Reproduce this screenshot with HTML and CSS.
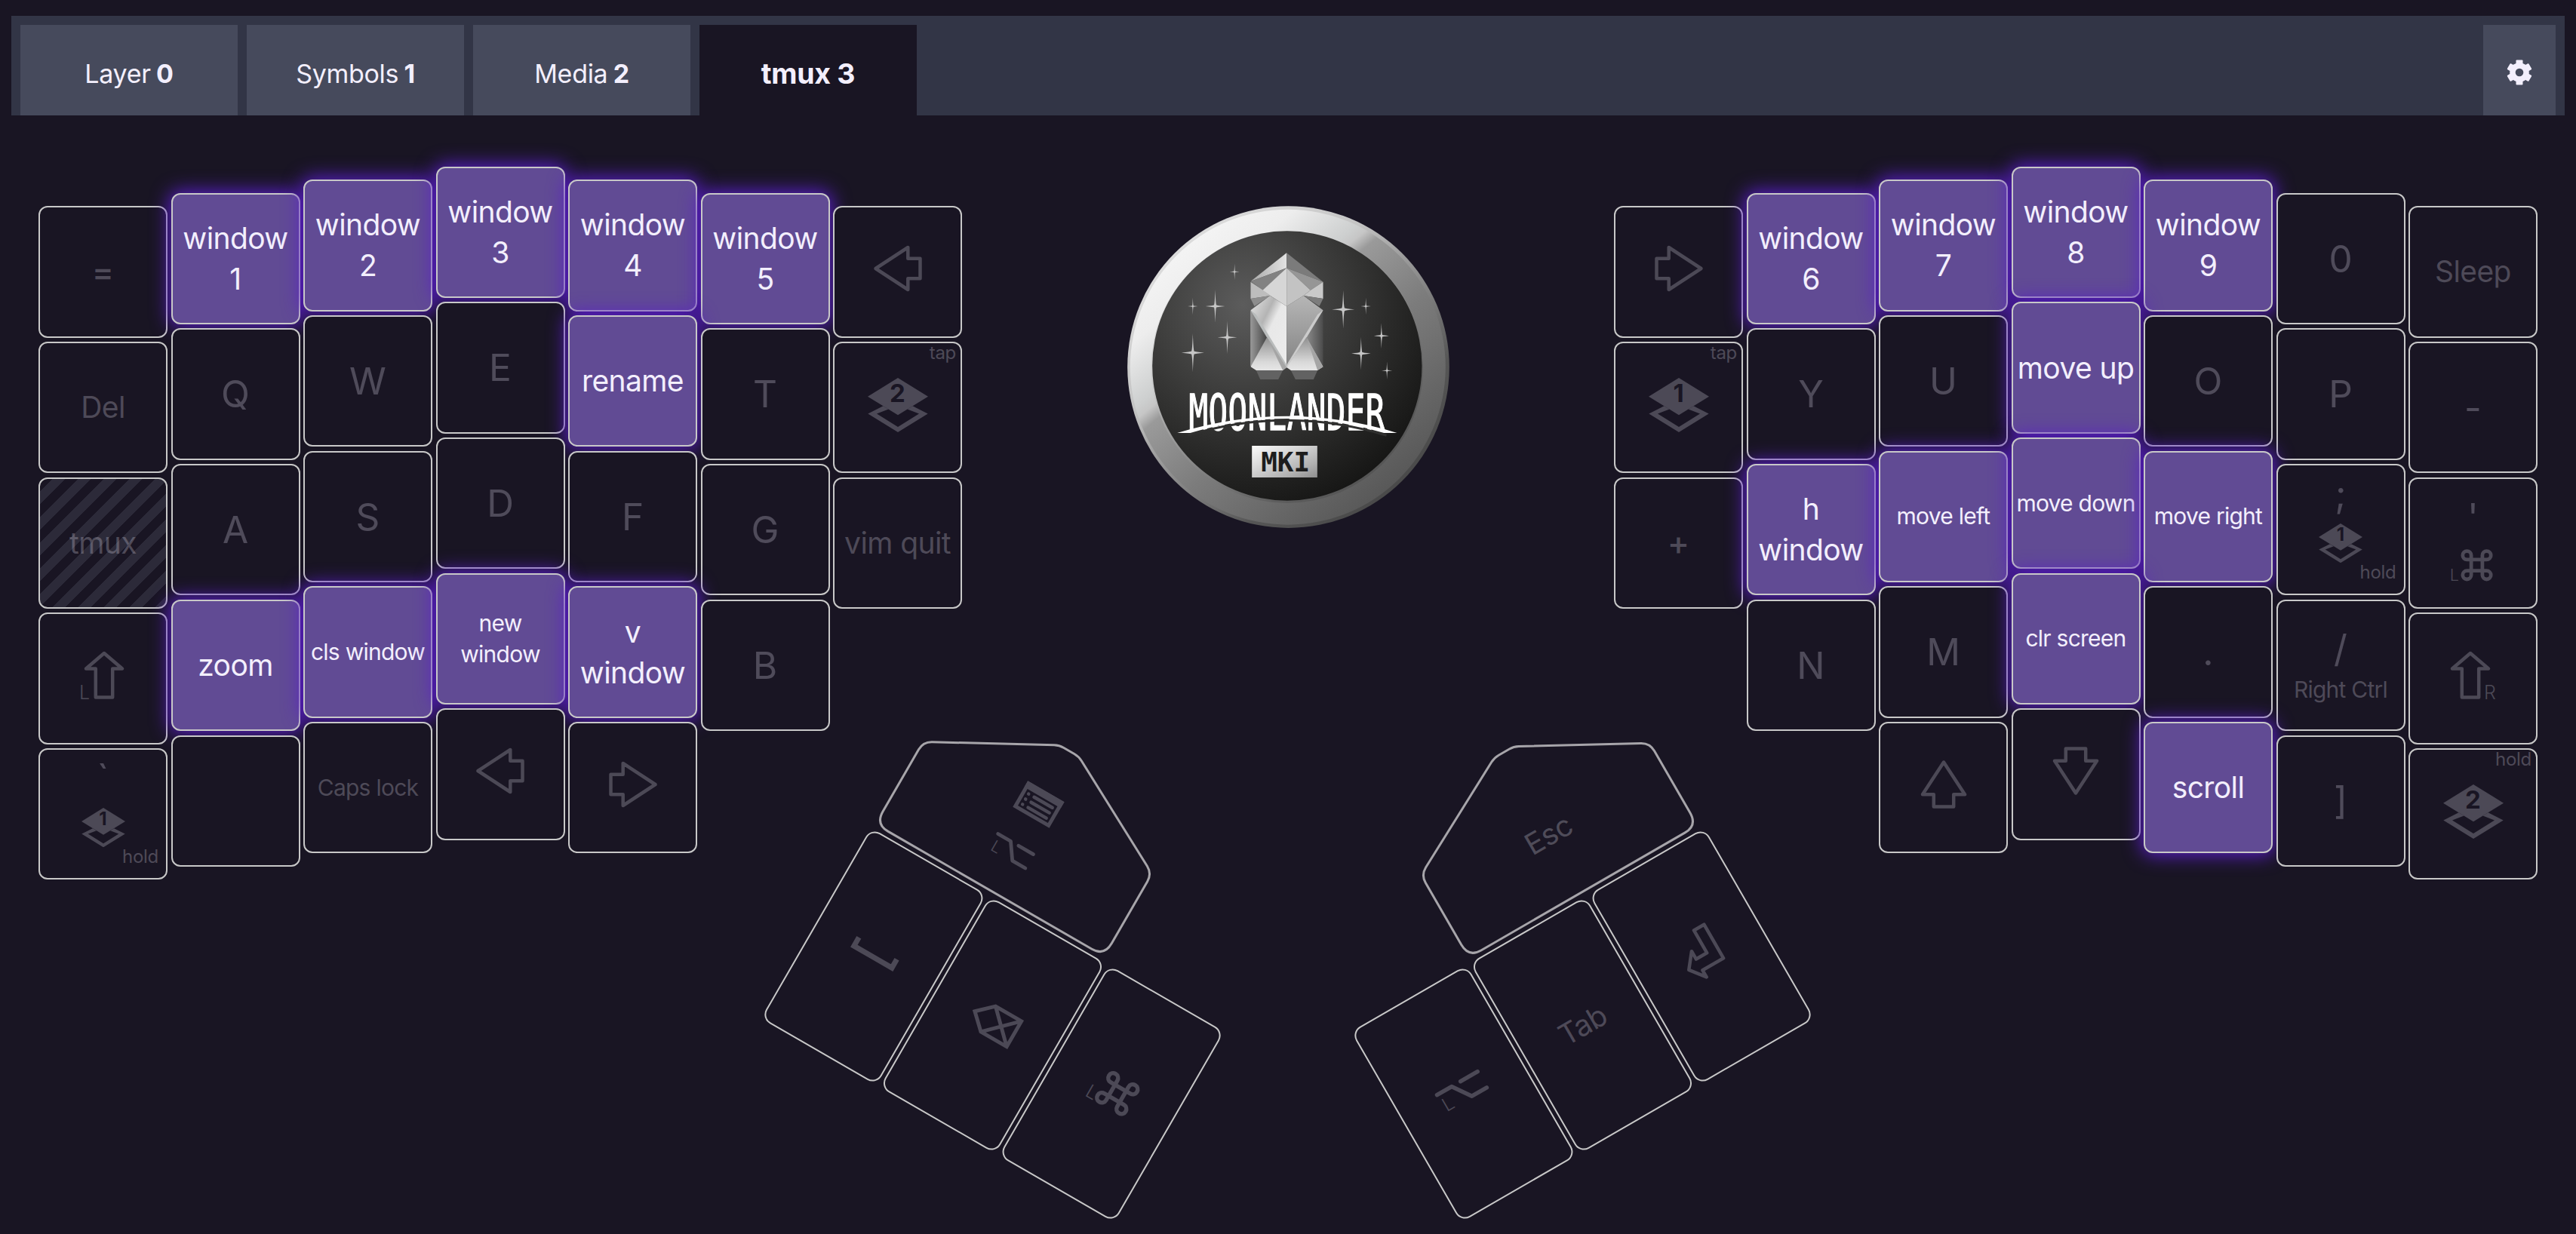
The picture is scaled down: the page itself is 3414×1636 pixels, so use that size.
FILE: index.html
```html
<!DOCTYPE html>
<html lang="en">
<head>
<meta charset="utf-8">
<title>Moonlander layout</title>
<link rel="stylesheet" href="styles.css">
</head>
<body>
<svg class="defs" aria-hidden="true">
  <symbol id="arrow-left" viewBox="-36 -36 72 72"><path class="line" d="M-29.5 0L13.3-28V-13.2H29.5V13.2H13.3V28Z"/></symbol>
  <symbol id="arrow-right" viewBox="-36 -36 72 72"><path class="line" d="M29.5 0L-13.3-28V-13.2H-29.5V13.2H-13.3V28Z"/></symbol>
  <symbol id="arrow-up" viewBox="-36 -36 72 72"><path class="line" d="M0-29.5L28 13.3H13.2V29.5H-13.2V13.3H-28Z"/></symbol>
  <symbol id="arrow-down" viewBox="-36 -36 72 72"><path class="line" d="M0 29.5L28-13.3H13.2V-29.5H-13.2V-13.3H-28Z"/></symbol>
  <symbol id="shift" viewBox="-36 -36 72 72"><path class="line" d="M0-29L24-8.5H11.2V29.5H-11.2V-8.5H-24Z"/></symbol>
  <symbol id="command" viewBox="-36 -36 72 72"><path class="line bold" d="M-8.5 15V-15A6.5 6.5 0 1 0-15-8.5H15A6.5 6.5 0 1 0 8.5-15V15A6.5 6.5 0 1 0 15 8.5H-15A6.5 6.5 0 1 0-8.5 15Z"/></symbol>
  <symbol id="option" viewBox="-36 -36 72 72"><path class="line bold" d="M-31-12.2H-8.7L8.3 12.2H31M5-12.2H31"/></symbol>
  <symbol id="space" viewBox="-36 -36 72 72"><path class="line sharp" d="M-29-8V5H29V-8" stroke-width="7"/></symbol>
  <symbol id="backspace" viewBox="-36 -36 72 72"><path class="line sharp" d="M-30 0L-9.5-19.5H30V19.5H-9.5ZM-9.5-19.5L30 19.5M-9.5 19.5L30-19.5"/></symbol>
  <symbol id="return" viewBox="-36 -36 72 72"><path class="line" d="M8-31H23.5V20.5H-8.5V31L-24 11L-8.5-8.5V3.5H8Z"/></symbol>
  <symbol id="layers" viewBox="0 0 80 72"><path d="M40 0L80 24.7L40 49.3L0 24.7Z" fill="currentColor"/><path d="M20.5 37.3L.3 47.6L40 72L79.7 47.6L59.5 37.3L52.5 41.6L68 47.6L40 65L12 47.6L27.5 41.6Z" fill="currentColor"/></symbol>
  <symbol id="menu" viewBox="-36 -36 72 72"><path class="line sharp" d="M-25.5-17.5H25.5V17.5H-25.5Z"/><path d="M-28-20H28V-10.500H-28Z" fill="currentColor"/><path class="line" d="M-10-5.500H18M-10 2.500H18M-10 10.500H18" stroke-width="4.200"/><path class="line" d="M-18.500-5.500h.1M-18.500 2.500h.1M-18.500 10.500h.1"/></symbol>
  <symbol id="star" viewBox="-50 -85 100 170"><path d="M0-82Q2.500-8 6-6Q9-4 48 0Q9 4 6 6Q2.500 8 0 82Q-2.500 8-6 6Q-9 4-48 0Q-9-4-6-6Q-2.500-8 0-82Z" fill="#c6c6c6"/></symbol>
</svg>

<header class="tabs">
  <div class="tab">Layer <b>0</b></div>
  <div class="tab">Symbols <b>1</b></div>
  <div class="tab">Media <b>2</b></div>
  <div class="tab current">tmux <b>3</b></div>
  <div class="settings">
    <svg viewBox="-20 -20 40 40"><g fill="#f3effd"><circle r="12.800"/><rect id="tooth" x="-4.500" y="-16.500" width="9" height="33" rx="1"/><use href="#tooth" transform="rotate(60)"/><use href="#tooth" transform="rotate(120)"/></g><circle r="5.300" fill="#464a5c"/></svg>
  </div>
</header>

<main class="board">
  <section class="half">
    <div class="row">
      <div class="key s0 sign">=</div>
      <div class="key s1 mid on">window<br>1</div>
      <div class="key s2 mid on">window<br>2</div>
      <div class="key s3 mid on">window<br>3</div>
      <div class="key s2 mid on">window<br>4</div>
      <div class="key s1 mid on">window<br>5</div>
      <div class="key s0"><svg class="icon"><use href="#arrow-left"/></svg></div>
    </div>
    <div class="row">
      <div class="key s0 mid">Del</div>
      <div class="key s1">Q</div>
      <div class="key s2">W</div>
      <div class="key s3">E</div>
      <div class="key s2 mid on">rename</div>
      <div class="key s1">T</div>
      <div class="key s0"><span class="badge top">tap</span><div class="layer"><svg><use href="#layers"/></svg><b>2</b></div></div>
    </div>
    <div class="row">
      <div class="key s0 mid striped">tmux</div>
      <div class="key s1">A</div>
      <div class="key s2">S</div>
      <div class="key s3">D</div>
      <div class="key s2">F</div>
      <div class="key s1">G</div>
      <div class="key s0 mid">vim quit</div>
    </div>
    <div class="row">
      <div class="key s0"><svg class="icon"><use href="#shift" x="1"/><text x="4" y="68" class="side">L</text></svg></div>
      <div class="key s1 mid on">zoom</div>
      <div class="key s2 small on">cls window</div>
      <div class="key s3 small on">new<br>window</div>
      <div class="key s2 mid on">v<br>window</div>
      <div class="key s1">B</div>
    </div>
    <div class="row">
      <div class="key s0 stack"><span>`</span><div class="layer little"><svg><use href="#layers"/></svg><b>1</b></div><span class="badge bottom">hold</span></div>
      <div class="key s1"></div>
      <div class="key s2 small">Caps lock</div>
      <div class="key s3"><svg class="icon"><use href="#arrow-left"/></svg></div>
      <div class="key s2"><svg class="icon"><use href="#arrow-right"/></svg></div>
    </div>
  </section>

  <svg class="logo" viewBox="100 68 1280 1282">
    <defs>
      <linearGradient id="rim" gradientUnits="userSpaceOnUse" x1="328" y1="211" x2="1142" y2="1199">
        <stop offset="0" stop-color="#f4f4f4"/><stop offset=".14" stop-color="#ededed"/><stop offset=".3" stop-color="#cdcfcf"/><stop offset=".33" stop-color="#c6c6c6"/><stop offset=".37" stop-color="#9a9a9a"/><stop offset=".6" stop-color="#7c7c7c"/><stop offset="1" stop-color="#585858"/>
      </linearGradient>
      <linearGradient id="edge" gradientUnits="userSpaceOnUse" x1="328" y1="211" x2="1142" y2="1199">
        <stop offset="0" stop-color="#dcdcdc"/><stop offset=".3" stop-color="#c4c4c4"/><stop offset=".45" stop-color="#a0a0a0"/><stop offset=".8" stop-color="#565656"/><stop offset="1" stop-color="#4a4a4a"/>
      </linearGradient>
      <radialGradient id="face" gradientUnits="userSpaceOnUse" cx="560" cy="460" r="830">
        <stop offset="0" stop-color="#5c5c5c"/><stop offset=".45" stop-color="#3c3c3b"/><stop offset=".8" stop-color="#242423"/><stop offset="1" stop-color="#171716"/>
      </radialGradient>
      <linearGradient id="plate" x1="0" y1="0" x2="1" y2="1"><stop offset="0" stop-color="#fafafa"/><stop offset=".35" stop-color="#dadada"/><stop offset=".75" stop-color="#b0b0b0"/><stop offset="1" stop-color="#8e8e8e"/></linearGradient>
      <linearGradient id="lit"><stop offset="0" stop-color="#a9a9a9"/><stop offset="1" stop-color="#e2e2e2"/></linearGradient>
      <linearGradient id="shade" x1="0" y1="0" x2="0" y2="1"><stop offset="0" stop-color="#b6b6b6"/><stop offset="1" stop-color="#838383"/></linearGradient>
      <linearGradient id="foot" x1="0" y1="0" x2="0" y2="1"><stop offset="0" stop-color="#8f8f8f"/><stop offset=".75" stop-color="#d9d9d9"/><stop offset="1" stop-color="#e6e6e6"/></linearGradient>
      <linearGradient id="bodyl" x1="0" y1="0" x2="1" y2="1"><stop offset=".1" stop-color="#d8d8d8"/><stop offset=".35" stop-color="#b4b4b4"/><stop offset=".5" stop-color="#e8e8e8"/><stop offset="1" stop-color="#ececec"/></linearGradient>
      <linearGradient id="tankl"><stop offset="0" stop-color="#9a9a9a"/><stop offset="1" stop-color="#3d3d3d"/></linearGradient>
      <linearGradient id="tankr"><stop offset="0" stop-color="#8f8f8f"/><stop offset="1" stop-color="#4b4b4b"/></linearGradient>
    </defs>
    <circle cx="740" cy="709" r="640" fill="url(#edge)"/>
    <circle cx="738" cy="709" r="627" fill="url(#rim)"/>
    <circle cx="735" cy="709" r="541" fill="url(#edge)" opacity=".6"/>
    <circle cx="735" cy="704" r="536" fill="url(#face)"/>
    <g>
      <use href="#star" x="506" y="293" width="40" height="74"/>
      <use href="#star" x="339" y="430" width="42" height="74"/>
      <use href="#star" x="409" y="399" width="80" height="136"/>
      <use href="#star" x="457" y="523" width="80" height="136"/>
      <use href="#star" x="313" y="572" width="94" height="160"/>
      <use href="#star" x="911" y="400" width="94" height="160"/>
      <use href="#star" x="1027" y="430" width="42" height="74"/>
      <use href="#star" x="1079" y="532" width="62" height="106"/>
      <use href="#star" x="989" y="587" width="80" height="136"/>
      <use href="#star" x="1110" y="685" width="44" height="76"/>
    </g>
    <path d="M589 485H660V705H589Z" fill="url(#tankl)"/>
    <path d="M808 485H878V705H808Z" fill="url(#tankr)"/>
    <path d="M733 255L590 368L733 315Z" fill="url(#lit)"/>
    <path d="M733 255L878 370L733 315Z" fill="#7b7b7b"/>
    <path d="M590 368L733 315L640 403Z" fill="#828282"/>
    <path d="M878 370L733 315L828 403Z" fill="#969696"/>
    <path d="M590 370L640 403L668 425L590 437Z" fill="#bdbdbd"/>
    <path d="M878 370L828 403L800 425L878 437Z" fill="#c9c9c9"/>
    <path d="M590 437L668 425L605 467Z" fill="#8d8d8d"/>
    <path d="M878 437L800 425L863 467Z" fill="#7c7c7c"/>
    <path d="M733 467L667 425L590 483L733 710Z" fill="url(#bodyl)"/>
    <path d="M733 467L800 425L878 483L733 710Z" fill="url(#shade)"/>
    <path d="M733 315L638 403L668 425L733 467Z" fill="#d6d6d6"/>
    <path d="M733 315L828 403L800 425L733 467Z" fill="#c3c3c3"/>
    <path d="M590 483L612 500L733 700V712L655 592Z" fill="#b9bcbc"/>
    <path d="M878 483L856 500L733 700V712L812 592Z" fill="#cbcbcb"/>
    <path d="M655 590L590 708L612 722H718L733 710Z" fill="url(#foot)"/>
    <path d="M812 590L878 708L856 722H750L733 710Z" fill="url(#foot)"/>
    <path d="M655 590L733 710L718 722ZM812 590L878 708L856 722Z" fill="#a5a5a5"/>
    <path d="M612 722H718L700 758H628ZM750 722H856L840 758H768Z" fill="#626262"/>
    <text class="wordmark" transform="translate(344 959) scale(.638 1)" textLength="1222">MOONLANDER</text>
    <path d="M340 981Q735 861 1130 981" fill="none" stroke="#30302f" stroke-width="9"/>
    <path d="M298 971Q735 837 1172 971H1120Q735 857 350 971Z" fill="#fff"/>
    <path d="M595 1022H855V1148H595Z" fill="url(#plate)"/>
    <text class="mark" x="631" y="1125">MKI</text>
  </svg>

  <section class="half">
    <div class="row">
      <div class="key s0"><svg class="icon"><use href="#arrow-right"/></svg></div>
      <div class="key s1 mid on">window<br>6</div>
      <div class="key s2 mid on">window<br>7</div>
      <div class="key s3 mid on">window<br>8</div>
      <div class="key s2 mid on">window<br>9</div>
      <div class="key s1">0</div>
      <div class="key s0 mid">Sleep</div>
    </div>
    <div class="row">
      <div class="key s0"><span class="badge top">tap</span><div class="layer"><svg><use href="#layers"/></svg><b>1</b></div></div>
      <div class="key s1">Y</div>
      <div class="key s2">U</div>
      <div class="key s3 mid on">move up</div>
      <div class="key s2">O</div>
      <div class="key s1">P</div>
      <div class="key s0">-</div>
    </div>
    <div class="row">
      <div class="key s0 sign">+</div>
      <div class="key s1 mid on">h<br>window</div>
      <div class="key s2 small on">move left</div>
      <div class="key s3 small on">move down</div>
      <div class="key s2 small on">move right</div>
      <div class="key s1 stack"><span>;</span><div class="layer little"><svg><use href="#layers"/></svg><b>1</b></div><span class="badge bottom">hold</span></div>
      <div class="key s0 stack quote"><span>'</span><svg class="icon little" viewBox="0 0 72 72"><use href="#command" x="6" width="72" height="72"/><text x="1" y="60" class="side">L</text></svg></div>
    </div>
    <div class="row shifted">
      <div class="key s1">N</div>
      <div class="key s2">M</div>
      <div class="key s3 small on">clr screen</div>
      <div class="key s2">.</div>
      <div class="key s1 stack slash"><span>/</span><span class="sub">Right Ctrl</span></div>
      <div class="key s0"><svg class="icon"><use href="#shift" x="-4"/><text x="50" y="68" class="side">R</text></svg></div>
    </div>
    <div class="row shifted-more">
      <div class="key s2"><svg class="icon"><use href="#arrow-up"/></svg></div>
      <div class="key s3"><svg class="icon"><use href="#arrow-down"/></svg></div>
      <div class="key s2 mid on">scroll</div>
      <div class="key s1">]</div>
      <div class="key s0"><span class="badge top">hold</span><div class="layer"><svg><use href="#layers"/></svg><b>2</b></div></div>
    </div>
  </section>
</main>

<section class="thumbs">
  <div class="thumb left">
    <svg class="cap" viewBox="-270.5 -367 360 221.5">
      <path class="outline" d="M-268-172V-267Q-268-279-257.500-284.700L-115-362.300Q-109-365.500-102-365.500H-86Q-79-365.500-73-362.200L72.500-284.700Q83-279 83-267V-172Q83-152.500 64-152.500H-249Q-268-152.500-268-172Z"/>
      <use href="#menu" x="-129.500" y="-319.500" width="72" height="72"/>
      <use href="#option" x="-125" y="-243.500" width="63" height="63"/>
      <text class="side less" x="-120" y="-199">L</text>
    </svg>
    <div class="trio">
      <div class="key tall"><svg class="icon"><use href="#space"/></svg></div>
      <div class="key tall"><svg class="icon"><use href="#backspace"/></svg></div>
      <div class="key tall"><svg class="icon"><use href="#command" x="6"/><text x="5" y="60" class="side">L</text></svg></div>
    </div>
  </div>
  <div class="thumb right">
    <svg class="cap" viewBox="-89.500 -367 360 221.5">
      <path class="outline" transform="translate(-3.500 0) scale(-1 1)" d="M-268-172V-267Q-268-279-257.500-284.700L-115-362.300Q-109-365.500-102-365.500H-86Q-79-365.500-73-362.200L72.500-284.700Q83-279 83-267V-172Q83-152.500 64-152.500H-249Q-268-152.500-268-172Z"/>
      <text class="name" x="87" y="-227">Esc</text>
    </svg>
    <div class="trio">
      <div class="key tall"><svg class="icon"><use href="#option"/><text x="5" y="50" class="side">L</text></svg></div>
      <div class="key tall mid">Tab</div>
      <div class="key tall"><svg class="icon"><use href="#return"/></svg></div>
    </div>
  </div>
</section>
</body>
</html>
```

FILE: styles.css
```css
:root {
  --bg: #191523;
  --dim: rgba(240, 236, 250, 0.255);
  --bright: #f3effd;
}

* { box-sizing: border-box; }

body {
  margin: 0;
  height: 1636px;
  overflow: hidden;
  background: var(--bg);
  color: var(--bright);
  font-family: Inter, "Liberation Sans", sans-serif;
}

.defs { display: none; }

/* Layer tabs */
.tabs {
  display: flex;
  gap: 12px;
  height: 132px;
  margin: 21px 15px 0;
  padding: 12px 12px 0;
  background: #323546;
}

.tab, .settings {
  display: flex;
  align-items: center;
  justify-content: center;
  width: 288px;
  height: 120px;
  padding-top: 8px;
  background: #464a5c;
  font-size: 34px;
  letter-spacing: -0.300px;
  white-space: pre;
}

.tab b { font-weight: 700; margin-left: -2px; }

.tab.current {
  background: var(--bg);
  font-size: 37.500px;
  font-weight: 700;
}
.tab.current b { margin-left: 0; }

.settings { width: 96px; margin-left: auto; padding-top: 5px; }
.settings svg { width: 40px; height: 40px; }

/* Key matrix */
.board {
  display: flex;
  justify-content: space-between;
  height: 1013px;
  padding: 120.3px 51px 0 51px;
}

.half {
  display: flex;
  flex-direction: column;
  gap: 5.700px;
  width: 1224px;
}

.row { display: flex; gap: 4.500px; height: 174px; }
.shifted { padding-left: 175.500px; }
.shifted-more { padding-left: 351px; }

.key {
  position: relative;
  display: flex;
  align-items: center;
  justify-content: center;
  flex: none;
  width: 171px;
  height: 174.300px;
  border: 2px solid #c8c8c8;
  border-radius: 12px;
  background-color: var(--bg);
  color: var(--dim);
  font-size: 49.500px;
  line-height: 58.500px;
  text-align: center;
  white-space: nowrap;
}

.s1 { margin-top: -17.500px; }
.s2 { margin-top: -35px; }
.s3 { margin-top: -52.600px; }

.mid { font-size: 39px; line-height: 54px; letter-spacing: -0.600px; }
.small { font-size: 30px; line-height: 41px; letter-spacing: -0.750px; }
.sign { font-size: 44px; font-weight: 500; }

.on {
  background-color: #614b94;
  color: var(--bright);
  box-shadow: 0 0 24px 3px #5a1fc8;
}

.striped {
  background-image: repeating-linear-gradient(135deg, transparent 0 12px, #2c2a39 12px 24px);
}

/* Legends */
.icon {
  width: 72px;
  height: 72px;
  margin-bottom: 9px;
  overflow: visible;
  color: #4c4956;
}

.line {
  fill: none;
  stroke: currentColor;
  stroke-width: 4.500;
  stroke-linejoin: round;
  stroke-linecap: round;
}

.line.bold { stroke-width: 5.500; }
.line.sharp { stroke-width: 5; stroke-linejoin: miter; stroke-linecap: butt; }
#space .line { stroke-width: 7; }

.side { fill: #4c4956; font-size: 25px; font-weight: 300; }
.side.less { font-size: 21.600px; }

.badge {
  position: absolute;
  font-size: 24px;
  line-height: 30px;
  letter-spacing: -0.300px;
}
.badge.top { top: -2px; right: 6px; }
.badge.bottom { right: 10px; bottom: 13px; }

.layer {
  display: grid;
  width: 80px;
  height: 72px;
  margin-bottom: 7px;
  color: #4c4956;
}
.layer > * { grid-area: 1 / 1; }
.layer svg { width: 100%; height: 100%; }
.layer b {
  color: var(--bg);
  font-size: 33px;
  line-height: 41px;
  font-weight: 700;
}
.layer.little { width: 58px; height: 52.400px; margin: 9px 0 0; }
.layer.little b { font-size: 24px; line-height: 30px; }

.stack { flex-direction: column; justify-content: flex-start; padding-top: 8px; line-height: 60px; }
.stack.quote { padding-top: 20px; }
.stack.slash { padding-top: 33px; }
.stack .icon.little { width: 62.600px; height: 62.600px; margin: 3px 0 0; }
.sub { font-size: 30px; line-height: 42px; margin-top: 3px; letter-spacing: -0.750px; }

/* Badge */
.logo { width: 427px; height: 427.300px; }
.wordmark { fill: #fff; stroke: #fff; stroke-width: 4; font: 200px "DejaVu Sans Mono", monospace; }
.mark { fill: #1d1d1d; font: bold 108px "DejaVu Sans Mono", monospace; }

/* Thumb clusters */
.thumbs {
  display: flex;
  justify-content: center;
  gap: 241px;
  width: 3412px;
  margin-top: -174.300px;
}

.thumb { width: 541px; transform-origin: 270.500px 367px; }
.thumb.left { transform: rotate(30deg); }
.thumb.right { transform: rotate(-30deg); }

.cap { display: block; width: 360px; height: 220.900px; overflow: visible; color: #4c4956; }
.thumb.right .cap { margin-left: auto; }
.outline { fill: none; stroke: #a7a5aa; stroke-width: 3; }
.name { fill: #4f4c59; font-size: 39px; letter-spacing: -0.300px; text-anchor: middle; }

.trio { display: flex; justify-content: center; gap: 4.900px; }
.key.tall { width: 177.400px; height: 292.400px; border-radius: 14px; }
```
